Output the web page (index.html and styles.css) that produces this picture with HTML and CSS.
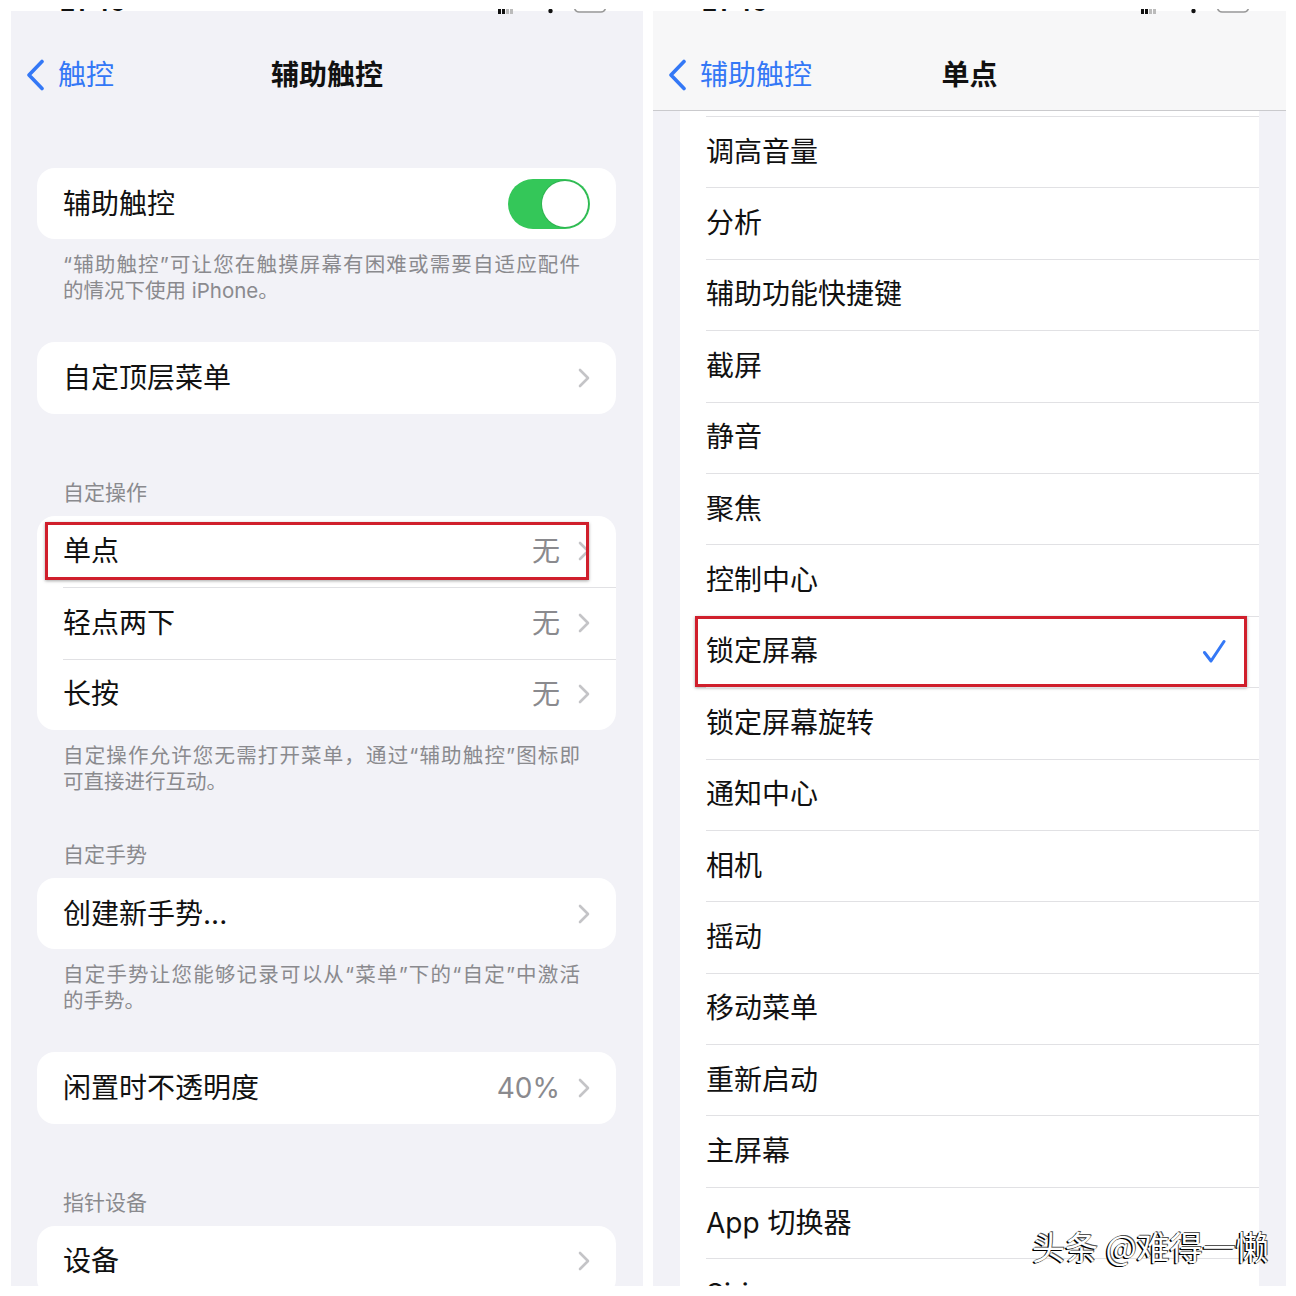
FILE: index.html
```html
<!DOCTYPE html>
<html lang="zh-CN">
<head>
    <meta charset="UTF-8">
    <meta name="viewport" content="width=device-width, initial-scale=1.0">
    <title>辅助触控 · 单点</title>
    <link rel="stylesheet" href="styles.css">
</head>
<body>
    <div class="screens">

        <!-- left screen: 辅助触控 settings -->
        <section class="phone">
            <div class="status">
                <span class="time">21:46</span>
                <svg class="status-icons" width="112" height="10" viewBox="0 0 112 10">
                    <rect x="0" y="2" width="3" height="8" fill="#111"/>
                    <rect x="4" y="2" width="3" height="8" fill="#111"/>
                    <rect x="8" y="2" width="3" height="8" fill="#bbb"/>
                    <rect x="12" y="2" width="3" height="8" fill="#bbb"/>
                    <circle cx="52.5" cy="7" r="2.2" fill="#111"/>
                    <path d="M76 0 Q76 8 81 8 L103 8 Q108 8 108 0" fill="none" stroke="#999" stroke-width="1.5"/>
                </svg>
            </div>
            <header class="nav">
                <a class="back">
                    <svg class="back-arrow" width="20" height="32" viewBox="0 0 20 32"><path d="M17 2.5 L4 16 L17 29.5" fill="none" stroke="#3478f6" stroke-width="3.6" stroke-linecap="round" stroke-linejoin="round"/></svg>
                    触控
                </a>
                <h1 class="nav-title">辅助触控</h1>
            </header>

            <div class="content">
                <div class="group">
                    <div class="row">
                        <span class="label">辅助触控</span>
                        <span class="switch"><span class="knob"></span></span>
                    </div>
                </div>
                <p class="note"><span class="line">“辅助触控”可让您在触摸屏幕有困难或需要自适应配件</span>的情况下使用 iPhone。</p>

                <div class="group">
                    <div class="row">
                        <span class="label">自定顶层菜单</span>
                        <svg class="chev" width="12" height="20" viewBox="0 0 12 20"><path d="M2 2 L10 10 L2 18" fill="none" stroke="#c4c4c7" stroke-width="2.6" stroke-linecap="round" stroke-linejoin="round"/></svg>
                    </div>
                </div>

                <h2 class="head">自定操作</h2>
                <div class="group">
                    <div class="row">
                        <span class="label">单点</span>
                        <span class="value">无</span>
                        <svg class="chev" width="12" height="20" viewBox="0 0 12 20"><path d="M2 2 L10 10 L2 18" fill="none" stroke="#c4c4c7" stroke-width="2.6" stroke-linecap="round" stroke-linejoin="round"/></svg>
                        <span class="mark mark-tap"></span>
                    </div>
                    <div class="row">
                        <span class="label">轻点两下</span>
                        <span class="value">无</span>
                        <svg class="chev" width="12" height="20" viewBox="0 0 12 20"><path d="M2 2 L10 10 L2 18" fill="none" stroke="#c4c4c7" stroke-width="2.6" stroke-linecap="round" stroke-linejoin="round"/></svg>
                    </div>
                    <div class="row">
                        <span class="label">长按</span>
                        <span class="value">无</span>
                        <svg class="chev" width="12" height="20" viewBox="0 0 12 20"><path d="M2 2 L10 10 L2 18" fill="none" stroke="#c4c4c7" stroke-width="2.6" stroke-linecap="round" stroke-linejoin="round"/></svg>
                    </div>
                </div>
                <p class="note"><span class="line">自定操作允许您无需打开菜单，通过“辅助触控”图标即</span>可直接进行互动。</p>

                <h2 class="head">自定手势</h2>
                <div class="group">
                    <div class="row">
                        <span class="label">创建新手势...</span>
                        <svg class="chev" width="12" height="20" viewBox="0 0 12 20"><path d="M2 2 L10 10 L2 18" fill="none" stroke="#c4c4c7" stroke-width="2.6" stroke-linecap="round" stroke-linejoin="round"/></svg>
                    </div>
                </div>
                <p class="note"><span class="line">自定手势让您能够记录可以从“菜单”下的“自定”中激活</span>的手势。</p>

                <div class="group">
                    <div class="row">
                        <span class="label">闲置时不透明度</span>
                        <span class="value">40%</span>
                        <svg class="chev" width="12" height="20" viewBox="0 0 12 20"><path d="M2 2 L10 10 L2 18" fill="none" stroke="#c4c4c7" stroke-width="2.6" stroke-linecap="round" stroke-linejoin="round"/></svg>
                    </div>
                </div>

                <h2 class="head">指针设备</h2>
                <div class="group">
                    <div class="row">
                        <span class="label">设备</span>
                        <svg class="chev" width="12" height="20" viewBox="0 0 12 20"><path d="M2 2 L10 10 L2 18" fill="none" stroke="#c4c4c7" stroke-width="2.6" stroke-linecap="round" stroke-linejoin="round"/></svg>
                    </div>
                </div>
            </div>
        </section>

        <!-- right screen: 单点 action list -->
        <section class="phone">
            <div class="status">
                <span class="time">21:46</span>
                <svg class="status-icons" width="112" height="10" viewBox="0 0 112 10">
                    <rect x="0" y="2" width="3" height="8" fill="#111"/>
                    <rect x="4" y="2" width="3" height="8" fill="#111"/>
                    <rect x="8" y="2" width="3" height="8" fill="#bbb"/>
                    <rect x="12" y="2" width="3" height="8" fill="#bbb"/>
                    <circle cx="52.5" cy="7" r="2.2" fill="#111"/>
                    <path d="M76 0 Q76 8 81 8 L103 8 Q108 8 108 0" fill="none" stroke="#999" stroke-width="1.5"/>
                </svg>
            </div>
            <header class="nav nav-bar">
                <a class="back">
                    <svg class="back-arrow" width="20" height="32" viewBox="0 0 20 32"><path d="M17 2.5 L4 16 L17 29.5" fill="none" stroke="#3478f6" stroke-width="3.6" stroke-linecap="round" stroke-linejoin="round"/></svg>
                    辅助触控
                </a>
                <h1 class="nav-title">单点</h1>
            </header>

            <div class="content">
                <div class="list">
                    <div class="row"><span class="label">调高音量</span></div>
                    <div class="row"><span class="label">分析</span></div>
                    <div class="row"><span class="label">辅助功能快捷键</span></div>
                    <div class="row"><span class="label">截屏</span></div>
                    <div class="row"><span class="label">静音</span></div>
                    <div class="row"><span class="label">聚焦</span></div>
                    <div class="row"><span class="label">控制中心</span></div>
                    <div class="row">
                        <span class="label">锁定屏幕</span>
                        <svg class="check" width="24" height="25" viewBox="0 0 24 25"><path d="M2.5 13.5 L9 22 L22 2.5" fill="none" stroke="#3478f6" stroke-width="3" stroke-linecap="round" stroke-linejoin="round"/></svg>
                        <span class="mark mark-lock"></span>
                    </div>
                    <div class="row"><span class="label">锁定屏幕旋转</span></div>
                    <div class="row"><span class="label">通知中心</span></div>
                    <div class="row"><span class="label">相机</span></div>
                    <div class="row"><span class="label">摇动</span></div>
                    <div class="row"><span class="label">移动菜单</span></div>
                    <div class="row"><span class="label">重新启动</span></div>
                    <div class="row"><span class="label">主屏幕</span></div>
                    <div class="row"><span class="label">App 切换器</span></div>
                    <div class="row"><span class="label">Siri</span></div>
                </div>
            </div>

            <div class="watermark">头条 @难得一懒</div>
        </section>

    </div>
</body>
</html>
```

FILE: styles.css
```css
* {
    box-sizing: border-box;
}

body {
    margin: 0;
    background-color: #fff;
    font-family: "Inter", "Noto Sans CJK SC", sans-serif;
    color: #111;
}

.screens {
    display: grid;
    grid-template-columns: 632px 633px;
    column-gap: 10px;
    padding: 11px 10px 0 11px;
}

.phone {
    position: relative;
    height: 1275px;
    background-color: #f2f2f7;
    display: flex;
    flex-direction: column;
}

/* status bar is cropped away, only a thin slice of the glyphs is left */
.status {
    position: absolute;
    top: -2px;
    left: 49px;
    right: 33px;
    height: 5px;
    overflow: hidden;
    display: flex;
    justify-content: space-between;
    align-items: flex-end;
}

.time {
    font-size: 24px;
    font-weight: 700;
    line-height: 1;
    margin-bottom: -1px;
}

.status-icons {
    display: block;
    flex-shrink: 0;
}

.nav {
    height: 99px;
    padding-top: 29px;
    display: grid;
    grid-template-columns: 1fr auto 1fr;
    align-items: center;
    flex-shrink: 0;
}

.nav-bar {
    height: 100px;
    background-color: #f7f7f8;
    border-bottom: 1.5px solid #cacacd;
}

.back {
    display: flex;
    align-items: center;
    gap: 13px;
    padding-left: 14px;
    font-size: 28px;
    line-height: 1;
    color: #3478f6;
}

.back-arrow {
    display: block;
}

.nav-title {
    margin: 0;
    font-size: 28px;
    font-weight: 700;
    line-height: 1;
}

.content {
    flex: 1;
    overflow: hidden;
}

.group {
    margin: 0 27px 0 26px;
    background-color: #fff;
    border-radius: 18px;
}

.content > .group:first-child {
    margin-top: 58px;
}

.group + .note {
    margin-top: 13px;
}

.note + .group {
    margin-top: 38px;
}

.group + .head {
    margin-top: 66px;
}

.note + .head {
    margin-top: 47px;
}

.row {
    position: relative;
    height: 71.4px;
    display: flex;
    align-items: center;
    padding: 0 26px;
    font-size: 28px;
    line-height: 1;
}

.group .row + .row::before,
.list .row::before {
    content: "";
    position: absolute;
    top: 0;
    left: 26px;
    right: 0;
    height: 1px;
    background-color: #e1e1e4;
}

.label {
    flex: 1;
}

.value {
    color: #8a8a8e;
    margin-right: 18px;
}

.chev {
    display: block;
}

.check {
    display: block;
    margin-right: 7px;
}

.switch {
    position: relative;
    width: 82px;
    height: 50px;
    border-radius: 25px;
    background-color: #34c759;
}

.knob {
    position: absolute;
    top: 2px;
    right: 2px;
    width: 46px;
    height: 46px;
    border-radius: 50%;
    background-color: #fff;
    box-shadow: 0 0 0 1px #2fb451;
}

.note {
    width: 517px;
    margin: 0 0 0 52px;
    font-size: 20.5px;
    line-height: 26px;
    color: #8a8a8e;
    white-space: nowrap;
}

/* first line of a footer runs the full width, like the wrapped original */
.note .line {
    display: block;
    text-align: justify;
    text-align-last: justify;
}

.head {
    margin: 0 0 10px 52px;
    font-size: 21px;
    font-weight: 400;
    line-height: 26px;
    color: #8a8a8e;
}

.list {
    margin: 0 27px;
    padding-top: 5px;
    background-color: #fff;
}

/* red highlight boxes drawn on the screenshot */
.mark {
    position: absolute;
    border: 3px solid #d01f2c;
    box-shadow: 0 1px 3px rgba(0, 0, 0, 0.35);
}

.mark-tap {
    left: 8px;
    top: 6px;
    right: 27px;
    bottom: 7px;
}

.mark-lock {
    left: 15px;
    top: 0;
    right: 12px;
    bottom: 0;
}

.watermark {
    position: absolute;
    left: 379px;
    top: 1219px;
    font-family: "Noto Sans CJK SC", sans-serif;
    font-size: 33px;
    line-height: 1;
    color: #fff;
    white-space: nowrap;
    text-shadow: -1.5px 1px 0 #000, 1px -1px 0 #555, 0 0 1px #000;
}
```
